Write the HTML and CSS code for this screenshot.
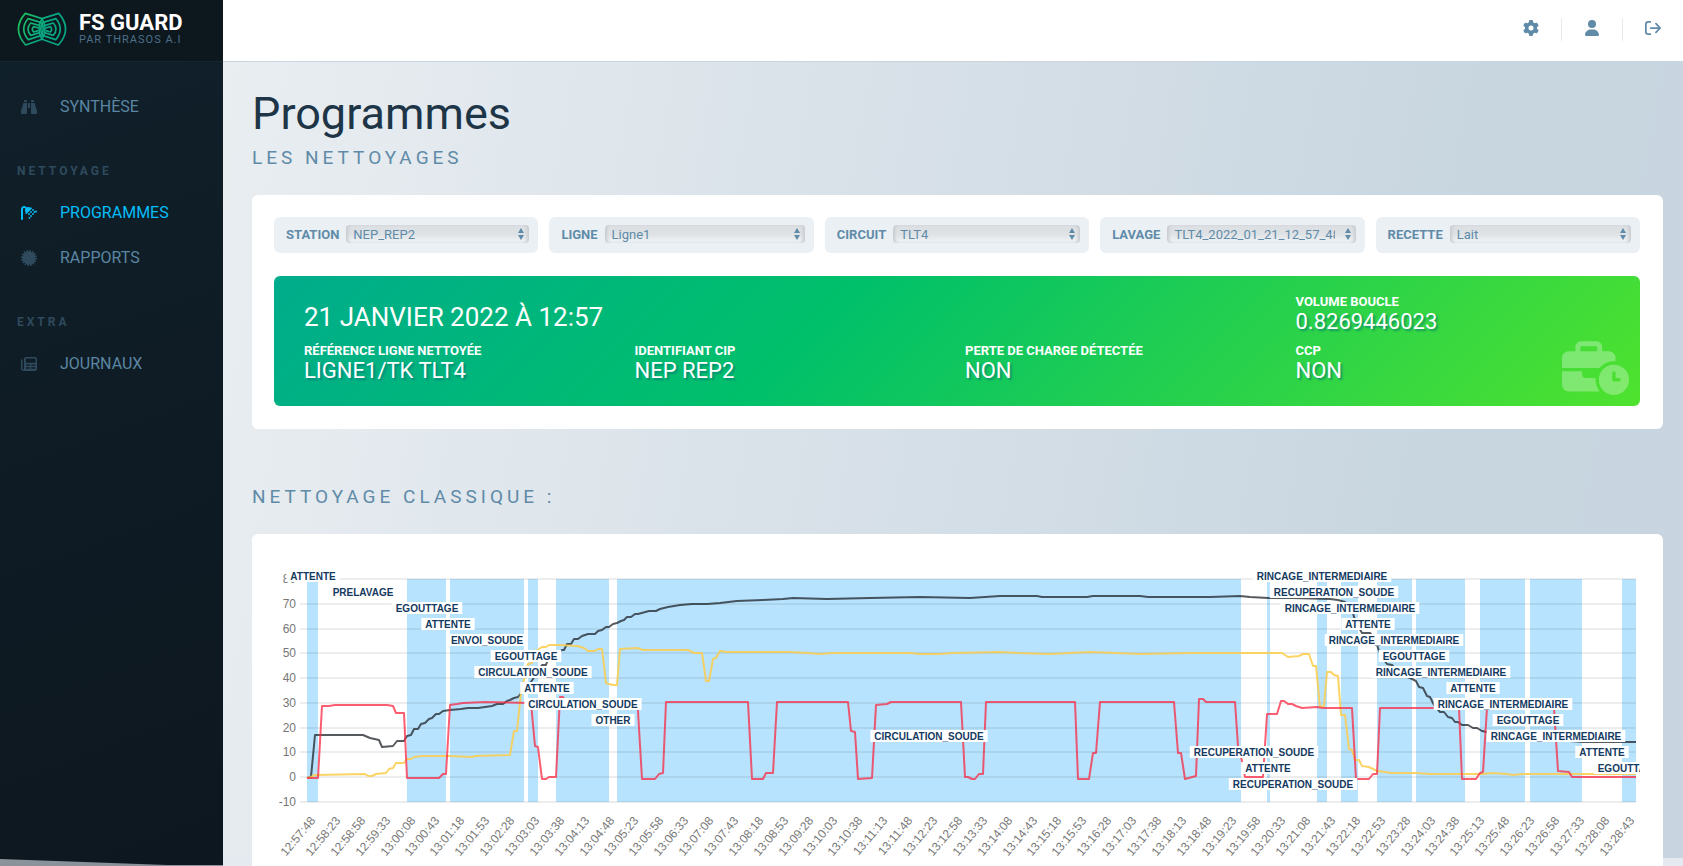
FILE: index.html
```html
<!DOCTYPE html>
<html lang="fr">
<head>
<meta charset="utf-8">
<meta name="viewport" content="width=device-width, initial-scale=1">
<title>FS Guard – Programmes</title>
<link rel="stylesheet" href="styles.css">
</head>
<body>
<div class="shell">
  <aside class="sidebar">
    <a class="brand" href="#">
      <svg class="brand-logo" viewBox="52 34 148 102" aria-hidden="true">
        <defs>
          <linearGradient id="logoGradient" gradientUnits="userSpaceOnUse" x1="52" y1="50" x2="130" y2="90">
            <stop offset="0" stop-color="#22c45c"/>
            <stop offset="1" stop-color="#08a683"/>
          </linearGradient>
        </defs>
        <g fill="none" stroke="url(#logoGradient)" stroke-width="5" stroke-linejoin="round">
          <path d="M126 54L76 38Q34 85 77 133L126 116Q144 85 126 54Z"/>
          <path d="M125 66L84 54Q58 85 85 117L125 104Q134 85 125 66Z"/>
          <path d="M119 75L92 67Q76 85 92 104L119 96"/>
          <path d="M115 82L101 78Q93 86 101 94L115 90"/>
          <path d="M126 54L176 38Q218 85 175 133L126 116Q108 85 126 54Z"/>
          <path d="M127 66L168 54Q194 85 167 117L127 104Q118 85 127 66Z"/>
          <path d="M133 75L160 67Q176 85 160 104L133 96"/>
          <path d="M137 82L151 78Q159 86 151 94L137 90"/>
        </g>
      </svg>
      <span class="brand-text">
        <span class="brand-name">FS GUARD</span>
        <span class="brand-sub">PAR THRASOS A.I</span>
      </span>
    </a>
    <nav class="menu">
      <a class="menu-link" href="#">
        <svg class="icon" viewBox="0 0 512 512" aria-hidden="true"><path d="M128 32h32c17.700 0 32 14.300 32 32V96H96V64c0-17.700 14.300-32 32-32zm64 96V448c0 17.700-14.300 32-32 32H32c-17.700 0-32-14.300-32-32V388.900c0-34.600 9.400-68.600 27.200-98.300C40.900 267.800 49.700 242.400 53 216L60.500 156c2-16 15.600-28 31.800-28H192zm227.800 0c16.100 0 29.800 12 31.800 28L459 216c3.300 26.400 12.100 51.800 25.800 74.600c17.800 29.700 27.200 63.700 27.200 98.300V448c0 17.700-14.300 32-32 32H352c-17.700 0-32-14.300-32-32V128h99.800zM320 64c0-17.700 14.300-32 32-32h32c17.700 0 32 14.300 32 32V96H320V64zm-32 64V288H224V128h64z"/></svg>
        <span>SYNTHÈSE</span>
      </a>
      <h2 class="menu-title">NETTOYAGE</h2>
      <a class="menu-link is-active" href="#" aria-current="page">
        <svg class="icon" viewBox="0 0 512 512" aria-hidden="true"><path d="M64 131.900C64 112.100 80.100 96 99.900 96c9.500 0 18.600 3.800 25.400 10.500l16.200 16.200c-21 38.900-17.400 87.500 10.900 123L151 247c-9.400 9.400-9.400 24.600 0 33.900s24.600 9.400 33.900 0L345 121c9.400-9.400 9.400-24.600 0-33.900s-24.600-9.400-33.900 0l-1.300 1.300c-35.500-28.300-84.200-31.900-123-10.900L170.500 61.300C151.800 42.500 126.400 32 99.900 32C44.700 32 0 76.700 0 131.900V448c0 17.700 14.300 32 32 32s32-14.300 32-32V131.900z"/><g><circle cx="256" cy="288" r="30"/><circle cx="320" cy="224" r="30"/><circle cx="384" cy="160" r="30"/><circle cx="320" cy="352" r="30"/><circle cx="384" cy="288" r="30"/><circle cx="432" cy="224" r="30"/><circle cx="482" cy="208" r="30"/><circle cx="272" cy="416" r="30"/></g></svg>
        <span>PROGRAMMES</span>
      </a>
      <a class="menu-link" href="#">
        <svg class="icon" viewBox="0 0 512 512" aria-hidden="true"><circle cx="256" cy="256" r="212"/><circle cx="256" cy="256" r="225" fill="none" stroke="currentColor" stroke-width="62" stroke-dasharray="52 36.360"/></svg>
        <span>RAPPORTS</span>
      </a>
      <h2 class="menu-title">EXTRA</h2>
      <a class="menu-link" href="#">
        <svg class="icon" viewBox="0 0 512 512" aria-hidden="true"><path fill-rule="evenodd" d="M96 96c0-35 29-64 64-64H448c35 0 64 29 64 64V416c0 35-29 64-64 64H80c-44 0-80-36-80-80V128c0-14 10-24 24-24s24 10 24 24V400c0 18 14 32 32 32s16-14 16-32V96zM176 80c-16 0-24 8-24 24V216H464V104c0-16-8-24-24-24zM160 272v40H280v-40zM328 272v40H456v-40zM160 360v48H280v-48zM328 360v48H456v-48z"/></svg>
        <span>JOURNAUX</span>
      </a>
    </nav>
  </aside>

  <div class="page">
    <header class="topbar">
      <button class="top-button" type="button" aria-label="Paramètres">
        <svg class="icon" viewBox="0 0 512 512" aria-hidden="true"><path d="M495.900 166.600c3.200 8.700 .5 18.400-6.400 24.600l-43.300 39.400c1.100 8.300 1.700 16.800 1.700 25.400s-.6 17.100-1.700 25.400l43.300 39.400c6.900 6.200 9.600 15.900 6.400 24.600c-4.400 11.900-9.700 23.300-15.800 34.300l-4.700 8.100c-6.600 11-14 21.400-22.100 31.200c-5.900 7.200-15.700 9.600-24.500 6.800l-55.700-17.700c-13.400 10.300-28.200 18.900-44 25.400l-12.500 57.100c-2 9.100-9 16.300-18.200 17.800c-13.800 2.300-28 3.500-42.500 3.500s-28.700-1.200-42.500-3.500c-9.200-1.500-16.200-8.700-18.200-17.800l-12.500-57.100c-15.800-6.500-30.600-15.100-44-25.400L83.100 425.900c-8.800 2.800-18.600 .3-24.500-6.800c-8.100-9.800-15.500-20.200-22.100-31.200l-4.700-8.100c-6.100-11-11.400-22.400-15.800-34.300c-3.200-8.700-.5-18.400 6.400-24.600l43.300-39.400C64.600 273.100 64 264.600 64 256s.6-17.100 1.700-25.400L22.400 191.200c-6.900-6.200-9.600-15.900-6.400-24.600c4.400-11.900 9.700-23.300 15.800-34.300l4.700-8.100c6.600-11 14-21.400 22.100-31.200c5.900-7.200 15.700-9.600 24.500-6.800l55.700 17.700c13.400-10.300 28.200-18.900 44-25.400l12.500-57.100c2-9.100 9-16.300 18.200-17.800C227.300 1.200 241.500 0 256 0s28.700 1.200 42.500 3.500c9.200 1.500 16.200 8.700 18.200 17.800l12.500 57.100c15.800 6.500 30.600 15.100 44 25.400l55.700-17.700c8.800-2.800 18.600-.3 24.500 6.800c8.100 9.800 15.500 20.200 22.100 31.200l4.700 8.100c6.100 11 11.400 22.400 15.800 34.300zM256 336a80 80 0 1 0 0-160 80 80 0 1 0 0 160z"/></svg>
      </button>
      <button class="top-button" type="button" aria-label="Profil">
        <svg class="icon" viewBox="-32 0 512 512" aria-hidden="true"><path d="M224 256A128 128 0 1 0 224 0a128 128 0 1 0 0 256zm-45.700 48C79.800 304 0 383.800 0 482.300C0 498.700 13.300 512 29.700 512H418.300c16.400 0 29.700-13.300 29.700-29.700C448 383.800 368.200 304 269.700 304H178.300z"/></svg>
      </button>
      <button class="top-button" type="button" aria-label="Déconnexion">
        <svg class="icon" viewBox="0 0 512 512" aria-hidden="true"><path d="M168 60H104a76 76 0 0 0-76 76V376a76 76 0 0 0 76 76H168M184 256H480M352 116L484 256L352 396" fill="none" stroke="currentColor" stroke-width="56" stroke-linecap="round" stroke-linejoin="round"/></svg>
      </button>
    </header>

    <main class="content">
      <h1 class="title">Programmes</h1>
      <p class="subtitle">LES NETTOYAGES</p>

      <section class="card">
        <form class="filters">
          <div class="filter"><label for="station">STATION</label><span class="select-box"><select id="station"><option>NEP_REP2</option></select></span></div>
          <div class="filter"><label for="ligne">LIGNE</label><span class="select-box"><select id="ligne"><option>Ligne1</option></select></span></div>
          <div class="filter"><label for="circuit">CIRCUIT</label><span class="select-box"><select id="circuit"><option>TLT4</option></select></span></div>
          <div class="filter"><label for="lavage">LAVAGE</label><span class="select-box"><select id="lavage"><option>TLT4_2022_01_21_12_57_48</option></select></span></div>
          <div class="filter"><label for="recette">RECETTE</label><span class="select-box"><select id="recette"><option>Lait</option></select></span></div>
        </form>

        <div class="summary">
          <h2 class="summary-date">21 JANVIER 2022 À 12:57</h2>
          <div class="fact"><span class="fact-label">VOLUME BOUCLE</span><span class="fact-value">0.8269446023</span></div>
          <div class="fact"><span class="fact-label">RÉFÉRENCE LIGNE NETTOYÉE</span><span class="fact-value">LIGNE1/TK TLT4</span></div>
          <div class="fact"><span class="fact-label">IDENTIFIANT CIP</span><span class="fact-value">NEP REP2</span></div>
          <div class="fact"><span class="fact-label">PERTE DE CHARGE DÉTECTÉE</span><span class="fact-value">NON</span></div>
          <div class="fact"><span class="fact-label">CCP</span><span class="fact-value">NON</span></div>
          <svg class="summary-icon" viewBox="0 0 640 512" aria-hidden="true"><path d="M184 48H328c4.400 0 8 3.600 8 8V96H176V56c0-4.400 3.600-8 8-8zm-56 8V96H64C28.700 96 0 124.700 0 160v96H360.200c32.300-39.100 81.100-64 135.800-64c5.400 0 10.700 .2 16 .7V160c0-35.300-28.700-64-64-64H384V56c0-30.900-25.100-56-56-56H184c-30.900 0-56 25.100-56 56zM320.700 352H224c-17.700 0-32-14.300-32-32V288H0V416c0 35.300 28.700 64 64 64H360.200C335.100 449.600 320 410.500 320 368c0-5.400 .2-10.700 .7-16zm319.300 16a144 144 0 1 0-288 0 144 144 0 1 0 288 0zM496 288c8.800 0 16 7.200 16 16v48h32c8.800 0 16 7.200 16 16s-7.200 16-16 16H496c-8.800 0-16-7.200-16-16V304c0-8.800 7.200-16 16-16z"/></svg>
        </div>
      </section>

      <h2 class="subtitle section-title">NETTOYAGE CLASSIQUE :</h2>

      <section class="card">
        <svg class="chart" id="chart" viewBox="274 557 1366 330" role="img" aria-label="Courbes du nettoyage">
          <g id="bands" class="bands"></g>
          <g id="grid" class="grid"></g>
          <g id="ticks" class="ticks"></g>
          <g id="series" class="series"></g>
          <g id="phases" class="phases"></g>
        </svg>
      </section>
    </main>
  </div>
</div>
<script src="chart.js"></script>
</body>
</html>
```
FILE: styles.css
```css
*,
*::before,
*::after {
  box-sizing: border-box;
}

body {
  margin: 0;
  font-family: Roboto, "Liberation Sans", sans-serif;
  color: #1d3547;
}

h1,
h2,
p {
  margin: 0;
  font-weight: 400;
}

a {
  color: inherit;
  text-decoration: none;
}

.icon {
  width: 16px;
  height: 16px;
  fill: currentColor;
  flex: none;
}

.shell {
  display: flex;
  height: 100vh;
  overflow: hidden;
}

/* Sidebar */
.sidebar {
  position: relative;
  flex: none;
  width: 223px;
  background: linear-gradient(160deg, #10202a, #0d171f);
}

.sidebar::after {
  content: "";
  position: absolute;
  left: 0;
  right: 0;
  bottom: 0;
  height: 7px;
  background: #8b939a;
  clip-path: polygon(0 0, 75% 86%, 100% 86%, 100% 100%, 0 100%);
}

.brand {
  display: flex;
  align-items: center;
  gap: 12px;
  height: 62px;
  padding: 0 17px 4px;
  background: #0c171e;
  border-bottom: 1px solid #152630;
}

.brand-logo {
  width: 50px;
  height: 34px;
}

.brand-text {
  display: flex;
  flex-direction: column;
}

.brand-name {
  color: #fff;
  font-size: 22px;
  font-weight: 700;
  line-height: 22px;
}

.brand-sub {
  color: #4e708a;
  font-size: 11px;
  line-height: 11px;
  letter-spacing: 1px;
  white-space: nowrap;
}

.menu {
  padding-top: 22px;
}

.menu-link {
  display: flex;
  align-items: center;
  gap: 23px;
  height: 45px;
  padding-left: 21px;
  color: #5b86a3;
  font-size: 16px;
}

.menu-link .icon {
  color: #2f4a5c;
}

.menu-link.is-active,
.menu-link.is-active .icon {
  color: #06bdf8;
}

.menu-title {
  padding: 34px 17px 11px;
  color: #2f4a5c;
  font-size: 12px;
  font-weight: 700;
  line-height: 16px;
  letter-spacing: 3px;
}

/* Page frame */
.page {
  flex: 1;
  min-width: 0;
  display: flex;
  flex-direction: column;
  background:
    linear-gradient(100deg, #e9eef1 0%, #dbe3ea 35%, #c8d6e0 80%, #c8d5e0 100%) 0 0 / 100% calc(100% - 8px) no-repeat,
    #e4eaef;
}

.topbar {
  flex: none;
  display: flex;
  justify-content: flex-end;
  align-items: flex-start;
  height: 62px;
  padding-top: 18px;
  background: #fff;
  border-bottom: 1px solid #c8d5e1;
}

.top-button {
  display: flex;
  align-items: center;
  justify-content: center;
  width: 61px;
  height: 23px;
  padding: 0 0 3px;
  border: 0;
  background: none;
  color: #608ba8;
}

.top-button + .top-button {
  border-left: 1px solid #e8eaed;
}

.content {
  flex: 1;
  min-height: 0;
  overflow-y: auto;
  scrollbar-width: none;
  padding: 26px 20px 30px 29px;
}

.title {
  font-size: 45px;
  line-height: 52px;
}

.subtitle {
  padding-top: 7px;
  color: #608ba8;
  font-size: 19px;
  line-height: 22px;
  letter-spacing: 4px;
}

.section-title {
  padding: 0;
  margin-top: 57px;
}

.card {
  margin-top: 26px;
  padding: 22px 23px 23px 22px;
  background: #fff;
  border-radius: 6px;
}

/* Filters */
.filters {
  display: grid;
  grid-template-columns: repeat(5, minmax(0, 1fr));
  gap: 11px;
}

.filter {
  display: flex;
  align-items: center;
  gap: 7px;
  height: 36px;
  padding: 0 9px 2px 12px;
  background: #ebf0f5;
  border-radius: 6px;
  color: #608ba8;
  font-size: 13px;
}

.filter label {
  font-weight: 700;
}

.select-box {
  position: relative;
  flex: 1;
  min-width: 0;
  display: flex;
}

.select-box::before,
.select-box::after {
  content: "";
  position: absolute;
  right: 5px;
  border: 3px solid transparent;
  pointer-events: none;
}

.select-box::before {
  top: 3px;
  border-top-width: 0;
  border-bottom: 5px solid #608ba8;
}

.select-box::after {
  bottom: 3px;
  border-bottom-width: 0;
  border-top: 5px solid #608ba8;
}

.select-box select {
  appearance: none;
  width: 100%;
  height: 18px;
  padding: 0 21px 0 7px;
  border: 0;
  border-radius: 4px;
  background: linear-gradient(#dcdfe2 0%, #dee2e5 50%, #edf1f4 90%);
  box-shadow: inset 3px 0 3px -1px #c9ccd0, inset -3px 0 3px -1px #c9ccd0;
  color: #608ba8;
  font: inherit;
}

/* Cleaning summary */
.summary {
  position: relative;
  display: grid;
  grid-template-columns: repeat(4, minmax(0, 1fr));
  row-gap: 8px;
  margin-top: 23px;
  padding: 17px 22px 23px;
  background: linear-gradient(135deg, #00ac8c 0%, #00c06a 40%, #4fe22e 100%);
  border-radius: 6px;
  color: #fff;
}

.summary-date {
  grid-column: span 3;
  padding: 8px 8px 0;
  font-size: 26px;
  line-height: 32px;
}

.fact {
  display: flex;
  flex-direction: column;
  padding-left: 8px;
}

.fact-label {
  font-size: 13px;
  font-weight: 700;
  line-height: 17px;
}

.fact-value {
  font-size: 22px;
  line-height: 24px;
  text-shadow: 2px 2px 2px rgba(0, 110, 120, 0.6);
}

.summary-icon {
  position: absolute;
  right: 11px;
  bottom: 11px;
  width: 67px;
  height: 54px;
  fill: rgba(255, 255, 255, 0.3);
}

/* Chart */
.chart {
  display: block;
  width: 100%;
  height: auto;
  font-family: "Liberation Sans", Arial, sans-serif;
}

.bands rect {
  fill: #b8e3fe;
}

.grid line {
  stroke: rgba(0, 0, 0, 0.07);
  stroke-width: 2;
}

.ticks text {
  fill: #777;
  font-size: 12px;
  text-anchor: end;
}

.series polyline {
  fill: none;
  stroke-width: 2;
  stroke-linejoin: round;
}

.series .temperature {
  stroke: rgba(30, 35, 40, 0.75);
}

.series .conductivity {
  stroke: rgba(252, 205, 75, 0.85);
}

.series .flow {
  stroke: rgba(250, 40, 65, 0.75);
}

.phases rect {
  fill: #fff;
}

.phases text {
  fill: #153a5f;
  font-size: 10px;
  font-weight: 700;
  text-anchor: middle;
}
```
FILE: chart.js
```javascript
const SVG = "http://www.w3.org/2000/svg";

function add(parent, name, attributes, text) {
  const node = document.createElementNS(SVG, name);
  for (const key in attributes) node.setAttribute(key, attributes[key]);
  if (text !== undefined) node.textContent = text;
  document.getElementById(parent).appendChild(node);
  return node;
}

const plot = { left: 307, right: 1636, top: 580, bottom: 803 };

/* Alternating phases */
const bands = [
  [307, 318], [407, 446], [450, 524], [528, 538], [556, 609], [617, 1241],
  [1267, 1270], [1317, 1327], [1341, 1358], [1377, 1412], [1416, 1465],
  [1480, 1525], [1530, 1582], [1622, 1636]
];
for (const [from, to] of bands) {
  add("bands", "rect", { x: from, y: plot.top, width: to - from, height: plot.bottom - plot.top });
}

/* Value axis */
for (let value = -10; value <= 80; value += 10) {
  const y = Math.round(plot.bottom - (value + 10) * (plot.bottom - plot.top) / 90);
  add("grid", "line", { x1: 300, x2: plot.right, y1: y, y2: y });
  add("ticks", "text", { x: 296, y: y + 4 }, value);
}

/* Time axis: one label every 35 seconds */
const start = 12 * 3600 + 57 * 60 + 48;
for (let i = 0; i <= 53; i++) {
  const t = start + i * 35;
  const label = [Math.floor(t / 3600), Math.floor(t / 60) % 60, t % 60]
    .map(part => String(part).padStart(2, "0")).join(":");
  add("ticks", "text", { transform: `translate(${Math.round(316 + i * 24.88)} 822) rotate(-50)` }, label);
}

/* Measurements */
const series = {
  temperature: "307,779 311,778 315,736 363,736 370,739 379,741 382,748 393,747 397,742 404,742 407,737 411,736 414,730 418,730 421,725 425,724 429,720 432,719 436,715 439,715 443,712 450,711 461,710 468,709 478,709 492,707 497,705 503,705 507,702 510,701 514,699 518,698 522,693 528,687 533,680 537,673 542,666 546,666 548,660 557,655 562,651 564,651 567,645 571,645 574,640 578,640 582,637 588,635 595,635 598,632 602,631 606,628 609,628 613,625 617,624 621,622 624,621 627,618 631,618 635,615 638,615 649,612 656,612 660,610 668,608 680,606 692,605 707,605 720,604 737,602 763,601 783,600 793,599 827,600 870,599 920,598 970,599 1000,597 1037,597 1042,598 1087,598 1093,597 1140,597 1148,598 1210,598 1240,597 1250,598 1268,599 1292,599 1330,600 1338,601 1345,603 1352,610 1354,618 1358,627 1362,634 1370,634 1375,640 1379,652 1383,660 1387,665 1392,666 1400,675 1410,679 1416,682 1419,688 1423,689 1427,697 1430,698 1434,706 1440,713 1444,713 1448,718 1452,719 1455,723 1458,723 1462,726 1468,726 1473,729 1477,729 1482,732 1487,733 1570,742 1583,743 1636,743",
  conductivity: "307,779 311,778 315,776 365,775 368,777 372,777 376,775 386,774 389,770 393,769 396,764 404,764 407,760 411,760 414,758 422,757 428,757 450,757 472,758 475,757 510,756 514,732 517,732 521,693 528,665 532,664 536,652 542,648 546,648 549,646 560,646 577,647 584,649 588,652 595,652 598,650 602,650 606,684 609,685 613,686 617,686 620,650 637,649 643,651 688,651 694,654 702,654 706,682 709,682 713,660 716,659 720,652 727,653 790,653 807,654 820,655 833,654 910,654 920,655 940,655 953,654 1000,653 1017,654 1050,655 1090,653 1140,655 1190,654 1240,654 1250,654 1282,654 1288,658 1299,657 1303,655 1309,655 1313,667 1316,667 1320,708 1324,707 1327,673 1331,673 1334,676 1338,677 1341,716 1345,716 1349,750 1352,751 1355,761 1359,761 1362,767 1369,768 1377,772 1392,774 1417,774 1430,775 1470,775 1483,775 1492,774 1507,775 1513,776 1523,775 1636,775",
  flow: "307,779 318,779 322,707 329,707 335,706 362,706 387,706 393,707 396,714 404,714 407,779 439,779 443,775 446,775 450,706 457,705 463,704 485,703 531,704 535,747 538,748 542,780 546,780 549,778 556,778 560,698 563,698 567,704 637,704 638,712 642,780 655,780 659,775 663,774 666,703 748,703 752,780 763,780 766,774 773,774 777,703 848,703 851,732 855,733 858,780 872,779 876,706 887,705 891,703 961,703 965,778 968,778 972,780 975,780 979,775 983,775 986,703 993,703 1075,703 1078,780 1089,780 1093,754 1096,754 1100,703 1174,703 1178,754 1181,754 1185,780 1196,777 1199,700 1203,700 1206,703 1235,703 1238,747 1242,762 1245,778 1263,778 1267,715 1277,715 1281,702 1284,702 1288,705 1292,705 1296,707 1302,709 1317,708 1323,709 1348,709 1352,709 1356,780 1369,780 1373,775 1377,775 1380,709 1459,709 1462,780 1476,780 1480,774 1483,773 1487,709 1554,709 1558,772 1569,773 1572,778 1636,778"
};
for (const name in series) add("series", "polyline", { class: name, points: series[name] });

/* Phase labels: name, centre, row */
const phases = [
  ["ATTENTE", 313, 0], ["PRELAVAGE", 363, 1], ["EGOUTTAGE", 427, 2], ["ATTENTE", 448, 3],
  ["ENVOI_SOUDE", 487, 4], ["EGOUTTAGE", 526, 5], ["CIRCULATION_SOUDE", 533, 6],
  ["ATTENTE", 547, 7], ["CIRCULATION_SOUDE", 583, 8], ["OTHER", 613, 9],
  ["CIRCULATION_SOUDE", 929, 10], ["RECUPERATION_SOUDE", 1254, 11], ["ATTENTE", 1268, 12],
  ["RECUPERATION_SOUDE", 1293, 13], ["RINCAGE_INTERMEDIAIRE", 1322, 0],
  ["RECUPERATION_SOUDE", 1334, 1], ["RINCAGE_INTERMEDIAIRE", 1350, 2], ["ATTENTE", 1368, 3],
  ["RINCAGE_INTERMEDIAIRE", 1394, 4], ["EGOUTTAGE", 1414, 5], ["RINCAGE_INTERMEDIAIRE", 1441, 6],
  ["ATTENTE", 1473, 7], ["RINCAGE_INTERMEDIAIRE", 1503, 8], ["EGOUTTAGE", 1528, 9],
  ["RINCAGE_INTERMEDIAIRE", 1556, 10], ["ATTENTE", 1602, 11], ["EGOUTTAGE", 1629, 12]
];
for (const [name, x, row] of phases) {
  const y = 577 + row * 16;
  const box = add("phases", "rect", { y: y - 6, height: 12 });
  const width = add("phases", "text", { x, y: y + 4 }, name).getComputedTextLength();
  box.setAttribute("x", x - width / 2 - 4);
  box.setAttribute("width", width + 8);
}
```
